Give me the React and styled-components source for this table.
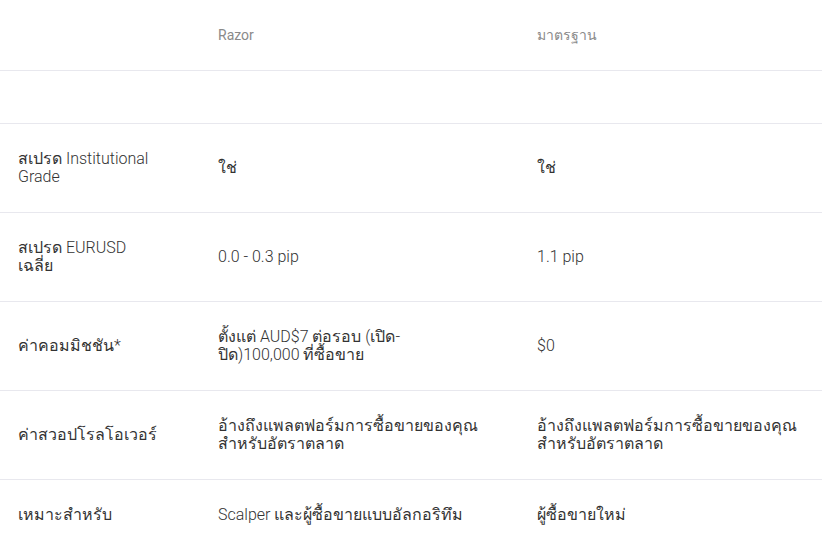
import React from "react";
import styled, { createGlobalStyle } from "styled-components";

const GlobalStyle = createGlobalStyle`
  html, body {
    margin: 0;
    padding: 0;
    background: #ffffff;
  }
  body {
    font-family: Roboto, "Noto Sans", sans-serif;
    -webkit-font-smoothing: antialiased;
  }
`;

const Table = styled.div`
  display: grid;
  grid-template-columns: 200px 319px 1fr;
  width: 822px;
`;

const Row = styled.div`
  display: contents;
`;

const HeadCell = styled.div`
  height: 70px;
  display: flex;
  align-items: center;
  padding-left: 18px;
  font-family: Roboto, "Noto Sans", sans-serif;
  font-size: 14px;
  font-weight: 400;
  color: #8a8a8a;
  border-bottom: 1px solid #e8e8ee;
`;

const SpacerCell = styled.div`
  height: 52px;
  border-bottom: 1px solid #e8e8ee;
`;

const Cell = styled.div`
  height: ${(p) => (p.$last ? 70 : 89)}px;
  box-sizing: border-box;
  display: flex;
  align-items: center;
  padding-left: 18px;
  padding-right: ${(p) => p.$pr}px;
  font-family: Roboto, "Noto Sans", sans-serif;
  font-size: 16px;
  font-weight: 300;
  line-height: 18px;
  color: #333333;
  border-bottom: ${(p) => (p.$last ? "none" : "1px solid #e8e8ee")};
`;

const rows = [
  ["สเปรด Institutional Grade", "ใช่", "ใช่"],
  ["สเปรด EURUSD เฉลี่ย", "0.0 - 0.3 pip", "1.1 pip"],
  ["ค่าคอมมิชชัน*", "ตั้งแต่ AUD$7 ต่อรอบ (เปิด-ปิด)100,000 ที่ซื้อขาย", "$0"],
  [
    "ค่าสวอปโรลโอเวอร์",
    "อ้างถึงแพลตฟอร์มการซื้อขายของคุณ สำหรับอัตราตลาด",
    "อ้างถึงแพลตฟอร์มการซื้อขายของคุณ สำหรับอัตราตลาด",
  ],
  ["เหมาะสำหรับ", "Scalper และผู้ซื้อขายแบบอัลกอริทึม", "ผู้ซื้อขายใหม่"],
];

const pads = [42, 41, 25];

export default function App() {
  return (
    <>
      <GlobalStyle />
      <Table>
        <Row>
          <HeadCell />
          <HeadCell>Razor</HeadCell>
          <HeadCell>มาตรฐาน</HeadCell>
        </Row>
        <Row>
          <SpacerCell />
          <SpacerCell />
          <SpacerCell />
        </Row>
        {rows.map((r, i) => (
          <Row key={i}>
            {r.map((c, j) => (
              <Cell key={j} $pr={pads[j]} $last={i === rows.length - 1}>
                <span>{c}</span>
              </Cell>
            ))}
          </Row>
        ))}
      </Table>
    </>
  );
}
